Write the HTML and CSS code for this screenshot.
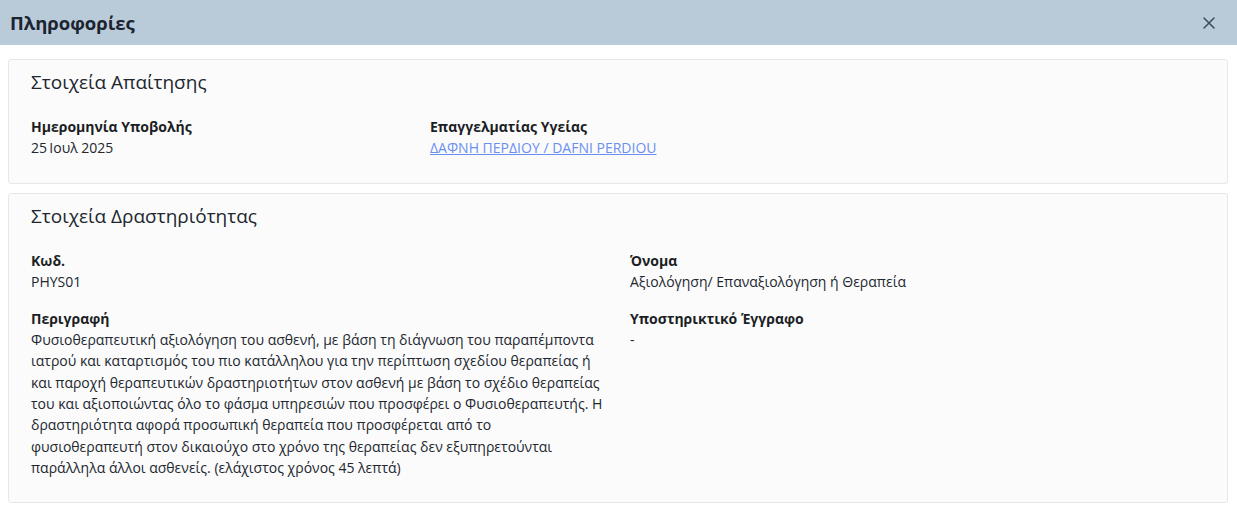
FILE: index.html
```html
<!DOCTYPE html>
<html lang="el">
<head>
<meta charset="utf-8">
<link rel="stylesheet" href="styles.css">
</head>
<body>
<div class="modal">
  <header class="modal-header">
    <h1 class="modal-title">Πληροφορίες</h1>
    <button class="close-btn" aria-label="close">
      <svg width="14" height="14" viewBox="0 0 14 14"><path d="M2 2L12 12M12 2L2 12" stroke="#3b4a5e" stroke-width="1.5" stroke-linecap="round"/></svg>
    </button>
  </header>
  <div class="modal-body">
    <section class="card">
      <h2 class="card-title">Στοιχεία Απαίτησης</h2>
      <div class="grid grid-3">
        <div class="field">
          <div class="label">Ημερομηνία Υποβολής</div>
          <div class="value">25&#8201;Ιουλ 2025</div>
        </div>
        <div class="field">
          <div class="label">Επαγγελματίας Υγείας</div>
          <div class="value"><a class="link" href="#">ΔΑΦΝΗ ΠΕΡΔΙΟΥ / DAFNI PERDIOU</a></div>
        </div>
      </div>
    </section>
    <section class="card card-tall">
      <h2 class="card-title">Στοιχεία Δραστηριότητας</h2>
      <div class="grid grid-2">
        <div class="field">
          <div class="label">Κωδ.</div>
          <div class="value">PHYS01</div>
        </div>
        <div class="field">
          <div class="label">Όνομα</div>
          <div class="value">Αξιολόγηση/ Επαναξιολόγηση ή Θεραπεία</div>
        </div>
        <div class="field">
          <div class="label">Περιγραφή</div>
          <div class="value desc">Φυσιοθεραπευτική αξιολόγηση του ασθενή, με βάση τη διάγνωση του παραπέμποντα ιατρού και καταρτισμός του πιο κατάλληλου για την περίπτωση σχεδίου θεραπείας ή και παροχή θεραπευτικών δραστηριοτήτων στον ασθενή με βάση το σχέδιο θεραπείας του και αξιοποιώντας όλο το φάσμα υπηρεσιών που προσφέρει ο Φυσιοθεραπευτής. Η δραστηριότητα αφορά προσωπική θεραπεία που προσφέρεται από το φυσιοθεραπευτή στον δικαιούχο στο χρόνο της θεραπείας δεν εξυπηρετούνται παράλληλα άλλοι ασθενείς. (ελάχιστος χρόνος 45 λεπτά)</div>
        </div>
        <div class="field">
          <div class="label">Υποστηρικτικό Έγγραφο</div>
          <div class="value">-</div>
        </div>
      </div>
    </section>
  </div>
</div>
</body>
</html>
```
FILE: styles.css
```css
* { box-sizing: border-box; }
html, body { margin: 0; padding: 0; background: #ffffff; }
body {
  font-family: "Open Sans", "Noto Sans", sans-serif;
  color: #1f2328;
}
.modal { width: 1237px; }
.modal-header {
  height: 45px;
  background: #b9cbd8;
  display: flex;
  align-items: center;
  justify-content: space-between;
  padding: 0 21px 0 10px;
}
.modal-title {
  margin: 0;
  font-size: 18.5px;
  font-weight: 700;
  color: #1b2430;
}
.close-btn {
  border: 0;
  background: transparent;
  padding: 0;
  width: 14px;
  height: 14px;
  display: flex;
  cursor: pointer;
}
.modal-body {
  padding: 14px 9px 0 8px;
  display: flex;
  flex-direction: column;
  gap: 9px;
}
.card {
  background: #fbfbfc;
  border: 1px solid #e6e7ea;
  border-radius: 3px;
  padding: 9px 22px 25px 22px;
}
.card-tall { padding-bottom: 24px; }
.card-title {
  margin: 0 0 21px 0;
  font-size: 19px;
  font-weight: 400;
  color: #20262d;
  line-height: 26px;
}
.grid { display: grid; row-gap: 16px; }
.grid-3 { grid-template-columns: 399px 399px 1fr; }
.grid-2 { grid-template-columns: 599px 1fr; }
.label {
  font-size: 14px;
  font-weight: 700;
  line-height: 21px;
  color: #1b1f24;
}
.value {
  font-size: 14px;
  line-height: 21px;
  color: #22272e;
}
.desc { width: 575px; line-height: 21.33px; }
.link { color: #6b8ff0; text-decoration: underline; }
```
